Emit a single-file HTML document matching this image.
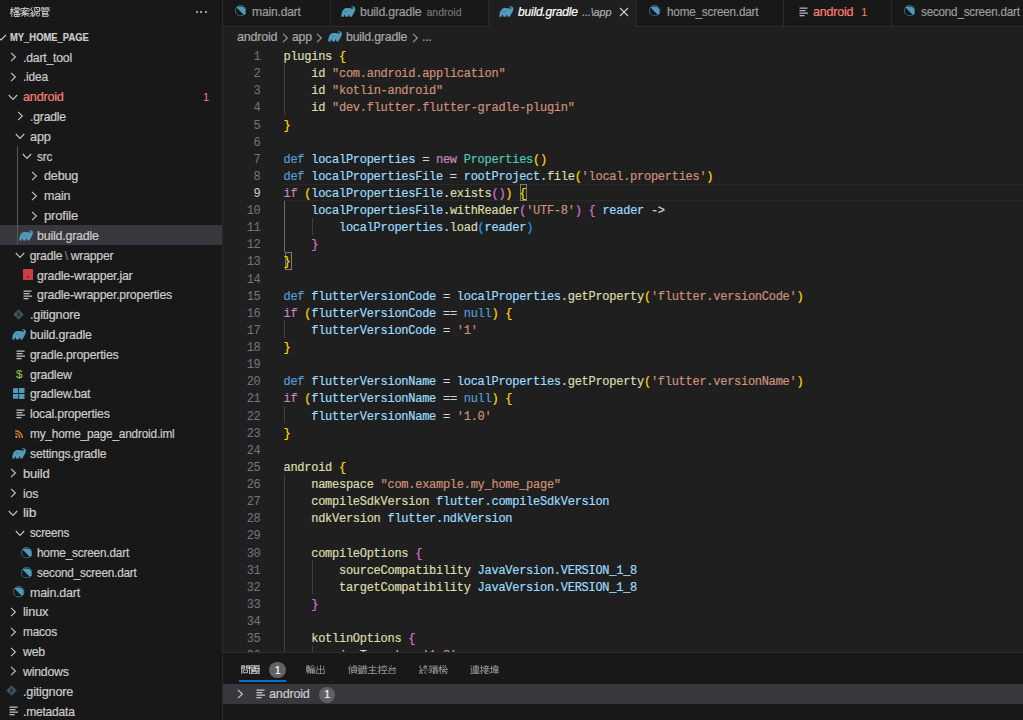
<!DOCTYPE html><html><head><meta charset="utf-8"><style>
html,body{margin:0;padding:0;background:#1f1f1f;}
#root{position:relative;width:1023px;height:720px;overflow:hidden;background:#1f1f1f;font-family:'Liberation Sans', sans-serif;}
#root div{font-family:'Liberation Sans', sans-serif;-webkit-text-stroke:0.2px currentColor;}
.code div{font-family:'Liberation Mono', monospace !important;}
</style></head><body><div id="root">
<div style="position:absolute;left:0;top:0;width:222px;height:720px;background:#181818"></div>
<div style="position:absolute;left:222px;top:0;width:1px;height:720px;background:#2b2b2b"></div>
<svg style="position:absolute;left:10px;top:6.8px;opacity:1.0" width="40.40" height="9.80" viewBox="0 0 41.224 10"><g fill="none" stroke="#cccccc" stroke-width="0.95" stroke-linecap="square"><path transform="translate(0.000,0)" d="M0.3,2.8 H3.5 M1.9,0.3 V9.8 M1.9,3.2 L0.3,7 M2,3.5 L3.5,5.5 M5.3,0.3 L5.6,1.2 M7,0.2 V1.2 M8.8,0.3 L8.5,1.2 M4.5,2.8 V1.8 H9.8 V2.8 M6,3.3 H8.5 V4.6 H6 Z M5,5.5 H9.3 V9.7 H5 Z M5,7.6 H9.3 M7.15,5.5 V9.7"/><path transform="translate(10.306,0)" d="M5,0.2 V1 M0.8,2.5 V1.5 H9.2 V2.5 M0.5,4 H9.5 M4,2.5 L2.5,6 L8,6.5 M7,3 L2,6.8 M0.5,7 H9.5 M5,5.5 V9.9 M5,7 L1,9.5 M5,7 L9,9.5"/><path transform="translate(20.612,0)" d="M2,0.3 L0.5,3 L3,4.2 L0.5,6.6 L4,6 M2.2,6.3 V9.8 M1,8 L0.5,9.5 M3.3,8 L3.8,9.5 M4.5,4 V0.5 H9.5 V4 Z M6,1.5 L8,3 M5,6 L4.5,8.5 M6.2,6 L7,9.3 L9,9 M7,5 L7.5,6.5 M9,6 L9.7,8"/><path transform="translate(30.918,0)" d="M2,0.2 L0.5,2 M1.5,1 H4.5 M3,1.2 L3.8,2.5 M6.5,0.2 L5,2 M6,1 H9.5 M7.5,1.2 L8.2,2.5 M0.8,3.8 V3 H9.2 V3.8 M2.5,4.5 V9.8 M2.5,4.5 H7.5 V6.5 H2.5 M2.5,7.5 H8 V9.5 H2.5"/></g></svg>
<div style="position:absolute;left:195.5px;top:10.8px;width:2px;height:2px;border-radius:1px;background:#c8c8c8"></div>
<div style="position:absolute;left:200px;top:10.8px;width:2px;height:2px;border-radius:1px;background:#c8c8c8"></div>
<div style="position:absolute;left:204.5px;top:10.8px;width:2px;height:2px;border-radius:1px;background:#c8c8c8"></div>
<svg style="position:absolute;left:0;top:34px" width="7" height="7" viewBox="0 0 7 7"><path d="M-4,1 L1,6 L6,1" fill="none" stroke="#cccccc" stroke-width="1.1"/></svg>
<div style="position:absolute;left:10.00px;top:30.50px;font-size:10.8px;line-height:12.8px;color:#cccccc;white-space:pre;font-weight:bold;transform:scaleX(0.872);transform-origin:0 0">MY_HOME_PAGE</div>
<svg style="position:absolute;left:9.5px;top:52.010000000000005px" width="7" height="10" viewBox="0 0 7 10"><path d="M1,0.8 L5.4,5 L1,9.2" fill="none" stroke="#c5c5c5" stroke-width="1.1"/></svg>
<div style="position:absolute;left:22.50px;top:50.50px;font-size:12.2px;line-height:14.2px;color:#cccccc;white-space:pre;letter-spacing:-0.2px;transform:scaleX(1.0027);transform-origin:0 0;">.dart_tool</div>
<svg style="position:absolute;left:9.5px;top:71.83px" width="7" height="10" viewBox="0 0 7 10"><path d="M1,0.8 L5.4,5 L1,9.2" fill="none" stroke="#c5c5c5" stroke-width="1.1"/></svg>
<div style="position:absolute;left:22.50px;top:70.32px;font-size:12.2px;line-height:14.2px;color:#cccccc;white-space:pre;letter-spacing:-0.2px;transform:scaleX(0.9782);transform-origin:0 0;">.idea</div>
<svg style="position:absolute;left:7.6px;top:93.65px" width="10" height="7" viewBox="0 0 10 7"><path d="M0.8,1 L5,5.4 L9.2,1" fill="none" stroke="#c5c5c5" stroke-width="1.1"/></svg>
<div style="position:absolute;left:22.50px;top:90.14px;font-size:12.2px;line-height:14.2px;color:#f88070;white-space:pre;letter-spacing:-0.2px;transform:scaleX(1.0357);transform-origin:0 0;">android</div>
<div style="position:absolute;left:203.00px;top:90.74px;font-size:11px;line-height:13px;color:#f88070;white-space:pre;-webkit-text-stroke:0;">1</div>
<svg style="position:absolute;left:16.7px;top:111.47px" width="7" height="10" viewBox="0 0 7 10"><path d="M1,0.8 L5.4,5 L1,9.2" fill="none" stroke="#c5c5c5" stroke-width="1.1"/></svg>
<div style="position:absolute;left:29.70px;top:109.96px;font-size:12.2px;line-height:14.2px;color:#cccccc;white-space:pre;letter-spacing:-0.2px;transform:scaleX(1.0027);transform-origin:0 0;">.gradle</div>
<svg style="position:absolute;left:14.799999999999999px;top:133.29px" width="10" height="7" viewBox="0 0 10 7"><path d="M0.8,1 L5,5.4 L9.2,1" fill="none" stroke="#c5c5c5" stroke-width="1.1"/></svg>
<div style="position:absolute;left:29.70px;top:129.78px;font-size:12.2px;line-height:14.2px;color:#cccccc;white-space:pre;letter-spacing:-0.2px;transform:scaleX(1.0478);transform-origin:0 0;">app</div>
<svg style="position:absolute;left:22.0px;top:153.10999999999999px" width="10" height="7" viewBox="0 0 10 7"><path d="M0.8,1 L5,5.4 L9.2,1" fill="none" stroke="#c5c5c5" stroke-width="1.1"/></svg>
<div style="position:absolute;left:36.90px;top:149.60px;font-size:12.2px;line-height:14.2px;color:#cccccc;white-space:pre;letter-spacing:-0.2px;transform:scaleX(0.9641);transform-origin:0 0;">src</div>
<svg style="position:absolute;left:31.1px;top:170.93px" width="7" height="10" viewBox="0 0 7 10"><path d="M1,0.8 L5.4,5 L1,9.2" fill="none" stroke="#c5c5c5" stroke-width="1.1"/></svg>
<div style="position:absolute;left:44.10px;top:169.42px;font-size:12.2px;line-height:14.2px;color:#cccccc;white-space:pre;letter-spacing:-0.2px;transform:scaleX(1.0357);transform-origin:0 0;">debug</div>
<svg style="position:absolute;left:31.1px;top:190.75px" width="7" height="10" viewBox="0 0 7 10"><path d="M1,0.8 L5.4,5 L1,9.2" fill="none" stroke="#c5c5c5" stroke-width="1.1"/></svg>
<div style="position:absolute;left:44.10px;top:189.24px;font-size:12.2px;line-height:14.2px;color:#cccccc;white-space:pre;letter-spacing:-0.2px;transform:scaleX(1.0256);transform-origin:0 0;">main</div>
<svg style="position:absolute;left:31.1px;top:210.57px" width="7" height="10" viewBox="0 0 7 10"><path d="M1,0.8 L5.4,5 L1,9.2" fill="none" stroke="#c5c5c5" stroke-width="1.1"/></svg>
<div style="position:absolute;left:44.10px;top:209.06px;font-size:12.2px;line-height:14.2px;color:#cccccc;white-space:pre;letter-spacing:-0.2px;transform:scaleX(1.0714);transform-origin:0 0;">profile</div>
<div style="position:absolute;left:0;top:225.48px;width:222px;height:19.82px;background:#37373d"></div>
<svg style="position:absolute;left:18.7px;top:229.98999999999998px" width="14.25" height="10.924999999999999" viewBox="0 0 15 11.5"><path d="M0.3,11 C0.3,8.5 0.8,5 2.9,3.2 C4,2.3 5,2 6,2 L9.6,2.3 C10.5,2.5 11.5,2.9 12.3,2.6 C12.9,2.2 12.8,1.6 12.2,1.4 L10.8,1.5 L10.8,0.3 C12.5,-0.1 14.4,0.5 14.6,2.6 C14.8,4.6 13.2,7 12.2,8.6 L10.9,11 L8.9,11 L8.05,8.5 L7.2,11 L4.5,11 L3.6,8.5 L2.7,11 Z" fill="#519aba"/><path d="M3.6,5.2 C4.6,6 5.6,5.8 6.4,4.9" fill="none" stroke="#1f1f1f" stroke-width="0.6" opacity="0.45"/></svg>
<div style="position:absolute;left:36.90px;top:228.88px;font-size:12.2px;line-height:14.2px;color:#cccccc;white-space:pre;letter-spacing:-0.2px;transform:scaleX(1.0185);transform-origin:0 0;">build.gradle</div>
<svg style="position:absolute;left:14.799999999999999px;top:252.20999999999998px" width="10" height="7" viewBox="0 0 10 7"><path d="M0.8,1 L5,5.4 L9.2,1" fill="none" stroke="#c5c5c5" stroke-width="1.1"/></svg>
<div style="position:absolute;left:29.70px;top:248.70px;font-size:12.2px;line-height:14.2px;color:#cccccc;white-space:pre;letter-spacing:-0.2px;">gradle</div>
<div style="position:absolute;left:64.70px;top:248.70px;font-size:12.2px;line-height:14.2px;color:#7a7a7a;white-space:pre;letter-spacing:-0.2px;">\</div>
<div style="position:absolute;left:70.70px;top:248.70px;font-size:12.2px;line-height:14.2px;color:#cccccc;white-space:pre;letter-spacing:-0.2px;">wrapper</div>
<svg style="position:absolute;left:22.9px;top:269.43px" width="10" height="11" viewBox="0 0 10 11"><rect x="0" y="0" width="10" height="11" fill="#cc3e44"/><rect x="4" y="7" width="2" height="1.5" fill="#6b1d20"/></svg>
<div style="position:absolute;left:36.90px;top:268.52px;font-size:12.2px;line-height:14.2px;color:#cccccc;white-space:pre;letter-spacing:-0.2px;transform:scaleX(1.0094);transform-origin:0 0;">gradle-wrapper.jar</div>
<svg style="position:absolute;left:23.299999999999997px;top:290.25px" width="10" height="10" viewBox="0 0 10 10"><g fill="#bbbbbb"><rect x="0.5" y="0.5" width="8" height="1.3"/><rect x="0.5" y="3" width="6" height="1.3"/><rect x="0.5" y="5.5" width="8.5" height="1.3"/><rect x="0.5" y="8" width="5" height="1.3"/></g></svg>
<div style="position:absolute;left:36.90px;top:288.34px;font-size:12.2px;line-height:14.2px;color:#cccccc;white-space:pre;letter-spacing:-0.2px;transform:scaleX(1.0082);transform-origin:0 0;">gradle-wrapper.properties</div>
<svg style="position:absolute;left:13.099999999999998px;top:308.87000000000006px" width="11" height="11" viewBox="0 0 11 11"><path d="M5.5,0.2 L10.8,5.5 L5.5,10.8 L0.2,5.5 Z" fill="#41535b"/><path d="M5,2.8 V8.2" stroke="#181818" stroke-width="0.9"/><path d="M6,4.6 L7,5.4 L6,6.2" fill="none" stroke="#181818" stroke-width="0.8"/></svg>
<div style="position:absolute;left:29.70px;top:308.16px;font-size:12.2px;line-height:14.2px;color:#cccccc;white-space:pre;letter-spacing:-0.2px;transform:scaleX(1.0418);transform-origin:0 0;">.gitignore</div>
<svg style="position:absolute;left:11.5px;top:329.0900000000001px" width="14.25" height="10.924999999999999" viewBox="0 0 15 11.5"><path d="M0.3,11 C0.3,8.5 0.8,5 2.9,3.2 C4,2.3 5,2 6,2 L9.6,2.3 C10.5,2.5 11.5,2.9 12.3,2.6 C12.9,2.2 12.8,1.6 12.2,1.4 L10.8,1.5 L10.8,0.3 C12.5,-0.1 14.4,0.5 14.6,2.6 C14.8,4.6 13.2,7 12.2,8.6 L10.9,11 L8.9,11 L8.05,8.5 L7.2,11 L4.5,11 L3.6,8.5 L2.7,11 Z" fill="#519aba"/><path d="M3.6,5.2 C4.6,6 5.6,5.8 6.4,4.9" fill="none" stroke="#1f1f1f" stroke-width="0.6" opacity="0.45"/></svg>
<div style="position:absolute;left:29.70px;top:327.98px;font-size:12.2px;line-height:14.2px;color:#cccccc;white-space:pre;letter-spacing:-0.2px;transform:scaleX(1.0185);transform-origin:0 0;">build.gradle</div>
<svg style="position:absolute;left:16.1px;top:349.71000000000004px" width="10" height="10" viewBox="0 0 10 10"><g fill="#bbbbbb"><rect x="0.5" y="0.5" width="8" height="1.3"/><rect x="0.5" y="3" width="6" height="1.3"/><rect x="0.5" y="5.5" width="8.5" height="1.3"/><rect x="0.5" y="8" width="5" height="1.3"/></g></svg>
<div style="position:absolute;left:29.70px;top:347.80px;font-size:12.2px;line-height:14.2px;color:#cccccc;white-space:pre;letter-spacing:-0.2px;transform:scaleX(1.0039);transform-origin:0 0;">gradle.properties</div>
<div style="position:absolute;left:15.899999999999999px;top:367.13000000000005px;font-size:11.8px;line-height:14px;color:#8dc149;-webkit-text-stroke:0.15px #8dc149">$</div>
<div style="position:absolute;left:29.70px;top:367.62px;font-size:12.2px;line-height:14.2px;color:#cccccc;white-space:pre;letter-spacing:-0.2px;transform:scaleX(1.0115);transform-origin:0 0;">gradlew</div>
<svg style="position:absolute;left:13.0px;top:388.35px" width="11.5" height="11" viewBox="0 0 11.5 11"><path d="M0,0.3 H5.3 V5.1 H0 Z M6.1,0 H11.5 V5.1 H6.1 Z M0,5.9 H5.3 V10.7 H0 Z M6.1,5.9 H11.5 V11 H6.1 Z" fill="#519aba"/></svg>
<div style="position:absolute;left:29.70px;top:387.44px;font-size:12.2px;line-height:14.2px;color:#cccccc;white-space:pre;letter-spacing:-0.2px;transform:scaleX(1.0021);transform-origin:0 0;">gradlew.bat</div>
<svg style="position:absolute;left:16.1px;top:409.17px" width="10" height="10" viewBox="0 0 10 10"><g fill="#bbbbbb"><rect x="0.5" y="0.5" width="8" height="1.3"/><rect x="0.5" y="3" width="6" height="1.3"/><rect x="0.5" y="5.5" width="8.5" height="1.3"/><rect x="0.5" y="8" width="5" height="1.3"/></g></svg>
<div style="position:absolute;left:29.70px;top:407.26px;font-size:12.2px;line-height:14.2px;color:#cccccc;white-space:pre;letter-spacing:-0.2px;transform:scaleX(1.0021);transform-origin:0 0;">local.properties</div>
<svg style="position:absolute;left:14.899999999999999px;top:429.99px" width="8.4" height="8" viewBox="0 0 9 9"><circle cx="1.4" cy="7.6" r="1.4" fill="#e37933"/><path d="M0,3.8 A5.2,5.2 0 0 1 5.2,9" fill="none" stroke="#e37933" stroke-width="1.6"/><path d="M0,0.9 A8.1,8.1 0 0 1 8.1,9" fill="none" stroke="#e37933" stroke-width="1.6"/></svg>
<div style="position:absolute;left:29.70px;top:427.08px;font-size:12.2px;line-height:14.2px;color:#cccccc;white-space:pre;letter-spacing:-0.2px;transform:scaleX(0.9702);transform-origin:0 0;">my_home_page_android.iml</div>
<svg style="position:absolute;left:11.5px;top:448.01000000000005px" width="14.25" height="10.924999999999999" viewBox="0 0 15 11.5"><path d="M0.3,11 C0.3,8.5 0.8,5 2.9,3.2 C4,2.3 5,2 6,2 L9.6,2.3 C10.5,2.5 11.5,2.9 12.3,2.6 C12.9,2.2 12.8,1.6 12.2,1.4 L10.8,1.5 L10.8,0.3 C12.5,-0.1 14.4,0.5 14.6,2.6 C14.8,4.6 13.2,7 12.2,8.6 L10.9,11 L8.9,11 L8.05,8.5 L7.2,11 L4.5,11 L3.6,8.5 L2.7,11 Z" fill="#519aba"/><path d="M3.6,5.2 C4.6,6 5.6,5.8 6.4,4.9" fill="none" stroke="#1f1f1f" stroke-width="0.6" opacity="0.45"/></svg>
<div style="position:absolute;left:29.70px;top:446.90px;font-size:12.2px;line-height:14.2px;color:#cccccc;white-space:pre;letter-spacing:-0.2px;transform:scaleX(0.9994);transform-origin:0 0;">settings.gradle</div>
<svg style="position:absolute;left:9.5px;top:468.2300000000001px" width="7" height="10" viewBox="0 0 7 10"><path d="M1,0.8 L5.4,5 L1,9.2" fill="none" stroke="#c5c5c5" stroke-width="1.1"/></svg>
<div style="position:absolute;left:22.50px;top:466.72px;font-size:12.2px;line-height:14.2px;color:#cccccc;white-space:pre;letter-spacing:-0.2px;transform:scaleX(1.0696);transform-origin:0 0;">build</div>
<svg style="position:absolute;left:9.5px;top:488.05000000000007px" width="7" height="10" viewBox="0 0 7 10"><path d="M1,0.8 L5.4,5 L1,9.2" fill="none" stroke="#c5c5c5" stroke-width="1.1"/></svg>
<div style="position:absolute;left:22.50px;top:486.54px;font-size:12.2px;line-height:14.2px;color:#cccccc;white-space:pre;letter-spacing:-0.2px;transform:scaleX(1.0136);transform-origin:0 0;">ios</div>
<svg style="position:absolute;left:7.6px;top:509.87px" width="10" height="7" viewBox="0 0 10 7"><path d="M0.8,1 L5,5.4 L9.2,1" fill="none" stroke="#c5c5c5" stroke-width="1.1"/></svg>
<div style="position:absolute;left:22.50px;top:506.36px;font-size:12.2px;line-height:14.2px;color:#cccccc;white-space:pre;letter-spacing:-0.2px;transform:scaleX(1.1373);transform-origin:0 0;">lib</div>
<svg style="position:absolute;left:14.799999999999999px;top:529.6899999999999px" width="10" height="7" viewBox="0 0 10 7"><path d="M0.8,1 L5,5.4 L9.2,1" fill="none" stroke="#c5c5c5" stroke-width="1.1"/></svg>
<div style="position:absolute;left:29.70px;top:526.18px;font-size:12.2px;line-height:14.2px;color:#cccccc;white-space:pre;letter-spacing:-0.2px;transform:scaleX(0.9487);transform-origin:0 0;">screens</div>
<svg style="position:absolute;left:20.5px;top:546.71px" width="11.399999999999999" height="11.399999999999999" viewBox="0 0 12 12"><path d="M3.6,0.7 L8.4,0.7 L11.3,3.6 L11.3,8.5 L8.5,11.3 L3.6,11.3 L0.7,8.4 L0.7,3.6 Z" fill="none" stroke="#3a7899" stroke-width="0.85"/><path d="M1.6,2.6 L3.4,1.6 L8.4,1.9 L10.9,4.1 L10.9,8.6 L9.4,10.6 Z" fill="#519aba"/></svg>
<div style="position:absolute;left:36.90px;top:546.00px;font-size:12.2px;line-height:14.2px;color:#cccccc;white-space:pre;letter-spacing:-0.2px;transform:scaleX(0.9681);transform-origin:0 0;">home_screen.dart</div>
<svg style="position:absolute;left:20.5px;top:566.5300000000001px" width="11.399999999999999" height="11.399999999999999" viewBox="0 0 12 12"><path d="M3.6,0.7 L8.4,0.7 L11.3,3.6 L11.3,8.5 L8.5,11.3 L3.6,11.3 L0.7,8.4 L0.7,3.6 Z" fill="none" stroke="#3a7899" stroke-width="0.85"/><path d="M1.6,2.6 L3.4,1.6 L8.4,1.9 L10.9,4.1 L10.9,8.6 L9.4,10.6 Z" fill="#519aba"/></svg>
<div style="position:absolute;left:36.90px;top:565.82px;font-size:12.2px;line-height:14.2px;color:#cccccc;white-space:pre;letter-spacing:-0.2px;transform:scaleX(0.9628);transform-origin:0 0;">second_screen.dart</div>
<svg style="position:absolute;left:13.3px;top:586.35px" width="11.399999999999999" height="11.399999999999999" viewBox="0 0 12 12"><path d="M3.6,0.7 L8.4,0.7 L11.3,3.6 L11.3,8.5 L8.5,11.3 L3.6,11.3 L0.7,8.4 L0.7,3.6 Z" fill="none" stroke="#3a7899" stroke-width="0.85"/><path d="M1.6,2.6 L3.4,1.6 L8.4,1.9 L10.9,4.1 L10.9,8.6 L9.4,10.6 Z" fill="#519aba"/></svg>
<div style="position:absolute;left:29.70px;top:585.64px;font-size:12.2px;line-height:14.2px;color:#cccccc;white-space:pre;letter-spacing:-0.2px;transform:scaleX(1.0193);transform-origin:0 0;">main.dart</div>
<svg style="position:absolute;left:9.5px;top:606.97px" width="7" height="10" viewBox="0 0 7 10"><path d="M1,0.8 L5.4,5 L1,9.2" fill="none" stroke="#c5c5c5" stroke-width="1.1"/></svg>
<div style="position:absolute;left:22.50px;top:605.46px;font-size:12.2px;line-height:14.2px;color:#cccccc;white-space:pre;letter-spacing:-0.2px;transform:scaleX(1.0460);transform-origin:0 0;">linux</div>
<svg style="position:absolute;left:9.5px;top:626.79px" width="7" height="10" viewBox="0 0 7 10"><path d="M1,0.8 L5.4,5 L1,9.2" fill="none" stroke="#c5c5c5" stroke-width="1.1"/></svg>
<div style="position:absolute;left:22.50px;top:625.28px;font-size:12.2px;line-height:14.2px;color:#cccccc;white-space:pre;letter-spacing:-0.2px;transform:scaleX(0.9704);transform-origin:0 0;">macos</div>
<svg style="position:absolute;left:9.5px;top:646.61px" width="7" height="10" viewBox="0 0 7 10"><path d="M1,0.8 L5.4,5 L1,9.2" fill="none" stroke="#c5c5c5" stroke-width="1.1"/></svg>
<div style="position:absolute;left:22.50px;top:645.10px;font-size:12.2px;line-height:14.2px;color:#cccccc;white-space:pre;letter-spacing:-0.2px;transform:scaleX(1.0101);transform-origin:0 0;">web</div>
<svg style="position:absolute;left:9.5px;top:666.43px" width="7" height="10" viewBox="0 0 7 10"><path d="M1,0.8 L5.4,5 L1,9.2" fill="none" stroke="#c5c5c5" stroke-width="1.1"/></svg>
<div style="position:absolute;left:22.50px;top:664.92px;font-size:12.2px;line-height:14.2px;color:#cccccc;white-space:pre;letter-spacing:-0.2px;transform:scaleX(1.0091);transform-origin:0 0;">windows</div>
<svg style="position:absolute;left:5.899999999999999px;top:685.45px" width="11" height="11" viewBox="0 0 11 11"><path d="M5.5,0.2 L10.8,5.5 L5.5,10.8 L0.2,5.5 Z" fill="#41535b"/><path d="M5,2.8 V8.2" stroke="#181818" stroke-width="0.9"/><path d="M6,4.6 L7,5.4 L6,6.2" fill="none" stroke="#181818" stroke-width="0.8"/></svg>
<div style="position:absolute;left:22.50px;top:684.74px;font-size:12.2px;line-height:14.2px;color:#cccccc;white-space:pre;letter-spacing:-0.2px;transform:scaleX(1.0418);transform-origin:0 0;">.gitignore</div>
<svg style="position:absolute;left:8.9px;top:706.47px" width="10" height="10" viewBox="0 0 10 10"><g fill="#bbbbbb"><rect x="0.5" y="0.5" width="8" height="1.3"/><rect x="0.5" y="3" width="6" height="1.3"/><rect x="0.5" y="5.5" width="8.5" height="1.3"/><rect x="0.5" y="8" width="5" height="1.3"/></g></svg>
<div style="position:absolute;left:22.50px;top:704.56px;font-size:12.2px;line-height:14.2px;color:#cccccc;white-space:pre;letter-spacing:-0.2px;transform:scaleX(0.9875);transform-origin:0 0;">.metadata</div>
<div style="position:absolute;left:17px;top:146.20px;width:1px;height:99.10px;background:#585858"></div>
<div style="position:absolute;left:223px;top:0;width:800px;height:26px;background:#181818"></div>
<div style="position:absolute;left:223px;top:26px;width:800px;height:1px;background:#2b2b2b"></div>
<div style="position:absolute;left:489px;top:0;width:147px;height:27px;background:#1f1f1f"></div>
<div style="position:absolute;left:330px;top:0;width:1px;height:26px;background:#2b2b2b"></div>
<div style="position:absolute;left:488px;top:0;width:1px;height:26px;background:#2b2b2b"></div>
<div style="position:absolute;left:636px;top:0;width:1px;height:26px;background:#2b2b2b"></div>
<div style="position:absolute;left:783px;top:0;width:1px;height:26px;background:#2b2b2b"></div>
<div style="position:absolute;left:891px;top:0;width:1px;height:26px;background:#2b2b2b"></div>
<svg style="position:absolute;left:234.6px;top:4.8px" width="11.399999999999999" height="11.399999999999999" viewBox="0 0 12 12"><path d="M3.6,0.7 L8.4,0.7 L11.3,3.6 L11.3,8.5 L8.5,11.3 L3.6,11.3 L0.7,8.4 L0.7,3.6 Z" fill="none" stroke="#3a7899" stroke-width="0.85"/><path d="M1.6,2.6 L3.4,1.6 L8.4,1.9 L10.9,4.1 L10.9,8.6 L9.4,10.6 Z" fill="#519aba"/></svg>
<div style="position:absolute;left:251.70px;top:5.00px;font-size:12.2px;line-height:14.2px;color:#9d9d9d;white-space:pre;letter-spacing:-0.2px;transform:scaleX(0.9948);transform-origin:0 0;">main.dart</div>
<svg style="position:absolute;left:341px;top:5.5px" width="14.7" height="11.27" viewBox="0 0 15 11.5"><path d="M0.3,11 C0.3,8.5 0.8,5 2.9,3.2 C4,2.3 5,2 6,2 L9.6,2.3 C10.5,2.5 11.5,2.9 12.3,2.6 C12.9,2.2 12.8,1.6 12.2,1.4 L10.8,1.5 L10.8,0.3 C12.5,-0.1 14.4,0.5 14.6,2.6 C14.8,4.6 13.2,7 12.2,8.6 L10.9,11 L8.9,11 L8.05,8.5 L7.2,11 L4.5,11 L3.6,8.5 L2.7,11 Z" fill="#519aba"/><path d="M3.6,5.2 C4.6,6 5.6,5.8 6.4,4.9" fill="none" stroke="#1f1f1f" stroke-width="0.6" opacity="0.45"/></svg>
<div style="position:absolute;left:360.00px;top:5.00px;font-size:12.2px;line-height:14.2px;color:#9d9d9d;white-space:pre;letter-spacing:-0.2px;transform:scaleX(1.0119);transform-origin:0 0;">build.gradle</div>
<div style="position:absolute;left:426.50px;top:5.85px;font-size:10.5px;line-height:12.5px;color:#7d7d7d;white-space:pre;-webkit-text-stroke:0.1px currentColor;">android</div>
<svg style="position:absolute;left:499px;top:5.5px" width="14.7" height="11.27" viewBox="0 0 15 11.5"><path d="M0.3,11 C0.3,8.5 0.8,5 2.9,3.2 C4,2.3 5,2 6,2 L9.6,2.3 C10.5,2.5 11.5,2.9 12.3,2.6 C12.9,2.2 12.8,1.6 12.2,1.4 L10.8,1.5 L10.8,0.3 C12.5,-0.1 14.4,0.5 14.6,2.6 C14.8,4.6 13.2,7 12.2,8.6 L10.9,11 L8.9,11 L8.05,8.5 L7.2,11 L4.5,11 L3.6,8.5 L2.7,11 Z" fill="#519aba"/><path d="M3.6,5.2 C4.6,6 5.6,5.8 6.4,4.9" fill="none" stroke="#1f1f1f" stroke-width="0.6" opacity="0.45"/></svg>
<div style="position:absolute;left:517.80px;top:5.00px;font-size:12.2px;line-height:14.2px;color:#ffffff;white-space:pre;letter-spacing:-0.2px;font-style:italic;transform:scaleX(0.9839);transform-origin:0 0;">build.gradle</div>
<div style="position:absolute;left:582.00px;top:5.70px;font-size:10.8px;line-height:12.8px;color:#b0b0b0;white-space:pre;font-style:italic;letter-spacing:-0.1px">...\app</div>
<svg style="position:absolute;left:619px;top:6.5px" width="10" height="10" viewBox="0 0 10 10"><path d="M1,1 L9,9 M9,1 L1,9" stroke="#cccccc" stroke-width="1.1"/></svg>
<svg style="position:absolute;left:649.4px;top:4.8px" width="11.399999999999999" height="11.399999999999999" viewBox="0 0 12 12"><path d="M3.6,0.7 L8.4,0.7 L11.3,3.6 L11.3,8.5 L8.5,11.3 L3.6,11.3 L0.7,8.4 L0.7,3.6 Z" fill="none" stroke="#3a7899" stroke-width="0.85"/><path d="M1.6,2.6 L3.4,1.6 L8.4,1.9 L10.9,4.1 L10.9,8.6 L9.4,10.6 Z" fill="#519aba"/></svg>
<div style="position:absolute;left:666.80px;top:5.00px;font-size:12.2px;line-height:14.2px;color:#9d9d9d;white-space:pre;letter-spacing:-0.2px;transform:scaleX(0.9608);transform-origin:0 0;">home_screen.dart</div>
<svg style="position:absolute;left:799px;top:7px" width="10" height="10" viewBox="0 0 10 10"><g fill="#b0b0b0"><rect x="0.5" y="0.5" width="8" height="1.3"/><rect x="0.5" y="3" width="6" height="1.3"/><rect x="0.5" y="5.5" width="8.5" height="1.3"/><rect x="0.5" y="8" width="5" height="1.3"/></g></svg>
<div style="position:absolute;left:812.80px;top:5.00px;font-size:12.2px;line-height:14.2px;color:#f88070;white-space:pre;letter-spacing:-0.2px;transform:scaleX(1.0255);transform-origin:0 0;">android</div>
<div style="position:absolute;left:861.30px;top:5.70px;font-size:10.8px;line-height:12.8px;color:#f88070;white-space:pre;-webkit-text-stroke:0;">1</div>
<svg style="position:absolute;left:904px;top:4.8px" width="11.399999999999999" height="11.399999999999999" viewBox="0 0 12 12"><path d="M3.6,0.7 L8.4,0.7 L11.3,3.6 L11.3,8.5 L8.5,11.3 L3.6,11.3 L0.7,8.4 L0.7,3.6 Z" fill="none" stroke="#3a7899" stroke-width="0.85"/><path d="M1.6,2.6 L3.4,1.6 L8.4,1.9 L10.9,4.1 L10.9,8.6 L9.4,10.6 Z" fill="#519aba"/></svg>
<div style="position:absolute;left:921.30px;top:5.00px;font-size:12.2px;line-height:14.2px;color:#9d9d9d;white-space:pre;letter-spacing:-0.2px;transform:scaleX(0.9550);transform-origin:0 0;">second_screen.dart</div>
<div style="position:absolute;left:237.20px;top:30.20px;font-size:12.2px;line-height:14.2px;color:#a9a9a9;white-space:pre;letter-spacing:-0.2px;transform:scaleX(1.0255);transform-origin:0 0;">android</div>
<svg style="position:absolute;left:282px;top:32.6px" width="7" height="10" viewBox="0 0 7 10"><path d="M1,0.8 L5.4,5 L1,9.2" fill="none" stroke="#9a9a9a" stroke-width="1.1"/></svg>
<div style="position:absolute;left:291.60px;top:30.20px;font-size:12.2px;line-height:14.2px;color:#a9a9a9;white-space:pre;letter-spacing:-0.2px;transform:scaleX(1.0023);transform-origin:0 0;">app</div>
<svg style="position:absolute;left:315.5px;top:32.6px" width="7" height="10" viewBox="0 0 7 10"><path d="M1,0.8 L5.4,5 L1,9.2" fill="none" stroke="#9a9a9a" stroke-width="1.1"/></svg>
<svg style="position:absolute;left:327.5px;top:31.0px" width="14.25" height="10.924999999999999" viewBox="0 0 15 11.5"><path d="M0.3,11 C0.3,8.5 0.8,5 2.9,3.2 C4,2.3 5,2 6,2 L9.6,2.3 C10.5,2.5 11.5,2.9 12.3,2.6 C12.9,2.2 12.8,1.6 12.2,1.4 L10.8,1.5 L10.8,0.3 C12.5,-0.1 14.4,0.5 14.6,2.6 C14.8,4.6 13.2,7 12.2,8.6 L10.9,11 L8.9,11 L8.05,8.5 L7.2,11 L4.5,11 L3.6,8.5 L2.7,11 Z" fill="#519aba"/><path d="M3.6,5.2 C4.6,6 5.6,5.8 6.4,4.9" fill="none" stroke="#1f1f1f" stroke-width="0.6" opacity="0.45"/></svg>
<div style="position:absolute;left:346.00px;top:30.20px;font-size:12.2px;line-height:14.2px;color:#a9a9a9;white-space:pre;letter-spacing:-0.2px;transform:scaleX(1.0102);transform-origin:0 0;">build.gradle</div>
<svg style="position:absolute;left:411.5px;top:32.6px" width="7" height="10" viewBox="0 0 7 10"><path d="M1,0.8 L5.4,5 L1,9.2" fill="none" stroke="#9a9a9a" stroke-width="1.1"/></svg>
<div style="position:absolute;left:422.00px;top:30.20px;font-size:12.2px;line-height:14.2px;color:#a9a9a9;white-space:pre;letter-spacing:-0.2px;">...</div>
<div style="position:absolute;left:223px;top:46px;width:800px;height:606.5px;overflow:hidden">
<div style="position:absolute;left:60.5px;top:138.16px;width:800px;height:14.42px;border-top:1px solid #282828;border-bottom:1px solid #282828"></div>
<div style="position:absolute;left:297.12px;top:137.96px;width:5.33px;height:15.12px;border:1px solid #7a7a7a;background:rgba(0,100,0,0.1)"></div>
<div style="position:absolute;left:61.50px;top:206.44px;width:5.33px;height:15.12px;border:1px solid #7a7a7a;background:rgba(0,100,0,0.1)"></div>
<div style="position:absolute;left:61.00px;top:17.62px;width:1px;height:51.36px;background:#404040"></div>
<div style="position:absolute;left:61.00px;top:154.58px;width:1px;height:51.36px;background:#707070"></div>
<div style="position:absolute;left:88.72px;top:171.70px;width:1px;height:17.12px;background:#404040"></div>
<div style="position:absolute;left:61.00px;top:274.42px;width:1px;height:17.12px;background:#404040"></div>
<div style="position:absolute;left:61.00px;top:360.02px;width:1px;height:17.12px;background:#404040"></div>
<div style="position:absolute;left:61.00px;top:428.50px;width:1px;height:205.44px;background:#404040"></div>
<div style="position:absolute;left:88.72px;top:514.10px;width:1px;height:34.24px;background:#404040"></div>
<div style="position:absolute;left:88.72px;top:599.70px;width:1px;height:34.24px;background:#404040"></div>
<div class="code" style="position:absolute;left:0px;top:3.04px;width:37.5px;text-align:right;font:12.0px/17.12px 'Liberation Mono', monospace;letter-spacing:-0.270px;color:#6e7681;-webkit-text-stroke:0.05px currentColor">1</div>
<div style="position:absolute;left:60.50px;top:3.04px;font:12.0px/17.12px 'Liberation Mono', monospace;letter-spacing:-0.270px;white-space:pre"><span style="color:#dcdcaa">plugins</span><span style="color:#d4d4d4"> </span><span style="color:#ffd700">{</span></div>
<div class="code" style="position:absolute;left:0px;top:20.16px;width:37.5px;text-align:right;font:12.0px/17.12px 'Liberation Mono', monospace;letter-spacing:-0.270px;color:#6e7681;-webkit-text-stroke:0.05px currentColor">2</div>
<div style="position:absolute;left:60.50px;top:20.16px;font:12.0px/17.12px 'Liberation Mono', monospace;letter-spacing:-0.270px;white-space:pre"><span style="color:#d4d4d4">    </span><span style="color:#dcdcaa">id</span><span style="color:#d4d4d4"> </span><span style="color:#ce9178">&quot;com.android.application&quot;</span></div>
<div class="code" style="position:absolute;left:0px;top:37.28px;width:37.5px;text-align:right;font:12.0px/17.12px 'Liberation Mono', monospace;letter-spacing:-0.270px;color:#6e7681;-webkit-text-stroke:0.05px currentColor">3</div>
<div style="position:absolute;left:60.50px;top:37.28px;font:12.0px/17.12px 'Liberation Mono', monospace;letter-spacing:-0.270px;white-space:pre"><span style="color:#d4d4d4">    </span><span style="color:#dcdcaa">id</span><span style="color:#d4d4d4"> </span><span style="color:#ce9178">&quot;kotlin-android&quot;</span></div>
<div class="code" style="position:absolute;left:0px;top:54.40px;width:37.5px;text-align:right;font:12.0px/17.12px 'Liberation Mono', monospace;letter-spacing:-0.270px;color:#6e7681;-webkit-text-stroke:0.05px currentColor">4</div>
<div style="position:absolute;left:60.50px;top:54.40px;font:12.0px/17.12px 'Liberation Mono', monospace;letter-spacing:-0.270px;white-space:pre"><span style="color:#d4d4d4">    </span><span style="color:#dcdcaa">id</span><span style="color:#d4d4d4"> </span><span style="color:#ce9178">&quot;dev.flutter.flutter-gradle-plugin&quot;</span></div>
<div class="code" style="position:absolute;left:0px;top:71.52px;width:37.5px;text-align:right;font:12.0px/17.12px 'Liberation Mono', monospace;letter-spacing:-0.270px;color:#6e7681;-webkit-text-stroke:0.05px currentColor">5</div>
<div style="position:absolute;left:60.50px;top:71.52px;font:12.0px/17.12px 'Liberation Mono', monospace;letter-spacing:-0.270px;white-space:pre"><span style="color:#ffd700">}</span></div>
<div class="code" style="position:absolute;left:0px;top:88.64px;width:37.5px;text-align:right;font:12.0px/17.12px 'Liberation Mono', monospace;letter-spacing:-0.270px;color:#6e7681;-webkit-text-stroke:0.05px currentColor">6</div>
<div class="code" style="position:absolute;left:0px;top:105.76px;width:37.5px;text-align:right;font:12.0px/17.12px 'Liberation Mono', monospace;letter-spacing:-0.270px;color:#6e7681;-webkit-text-stroke:0.05px currentColor">7</div>
<div style="position:absolute;left:60.50px;top:105.76px;font:12.0px/17.12px 'Liberation Mono', monospace;letter-spacing:-0.270px;white-space:pre"><span style="color:#569cd6">def</span><span style="color:#d4d4d4"> </span><span style="color:#9cdcfe">localProperties</span><span style="color:#d4d4d4"> = </span><span style="color:#c586c0">new</span><span style="color:#d4d4d4"> </span><span style="color:#4ec9b0">Properties</span><span style="color:#ffd700">()</span></div>
<div class="code" style="position:absolute;left:0px;top:122.88px;width:37.5px;text-align:right;font:12.0px/17.12px 'Liberation Mono', monospace;letter-spacing:-0.270px;color:#6e7681;-webkit-text-stroke:0.05px currentColor">8</div>
<div style="position:absolute;left:60.50px;top:122.88px;font:12.0px/17.12px 'Liberation Mono', monospace;letter-spacing:-0.270px;white-space:pre"><span style="color:#569cd6">def</span><span style="color:#d4d4d4"> </span><span style="color:#9cdcfe">localPropertiesFile</span><span style="color:#d4d4d4"> = </span><span style="color:#9cdcfe">rootProject</span><span style="color:#d4d4d4">.</span><span style="color:#dcdcaa">file</span><span style="color:#ffd700">(</span><span style="color:#ce9178">&#x27;local.properties&#x27;</span><span style="color:#ffd700">)</span></div>
<div class="code" style="position:absolute;left:0px;top:140.00px;width:37.5px;text-align:right;font:12.0px/17.12px 'Liberation Mono', monospace;letter-spacing:-0.270px;color:#cccccc;-webkit-text-stroke:0.05px currentColor">9</div>
<div style="position:absolute;left:60.50px;top:140.00px;font:12.0px/17.12px 'Liberation Mono', monospace;letter-spacing:-0.270px;white-space:pre"><span style="color:#c586c0">if</span><span style="color:#d4d4d4"> </span><span style="color:#ffd700">(</span><span style="color:#9cdcfe">localPropertiesFile</span><span style="color:#d4d4d4">.</span><span style="color:#dcdcaa">exists</span><span style="color:#da70d6">()</span><span style="color:#ffd700">)</span><span style="color:#d4d4d4"> </span><span style="color:#ffd700">{</span></div>
<div class="code" style="position:absolute;left:0px;top:157.12px;width:37.5px;text-align:right;font:12.0px/17.12px 'Liberation Mono', monospace;letter-spacing:-0.270px;color:#6e7681;-webkit-text-stroke:0.05px currentColor">10</div>
<div style="position:absolute;left:60.50px;top:157.12px;font:12.0px/17.12px 'Liberation Mono', monospace;letter-spacing:-0.270px;white-space:pre"><span style="color:#d4d4d4">    </span><span style="color:#9cdcfe">localPropertiesFile</span><span style="color:#d4d4d4">.</span><span style="color:#dcdcaa">withReader</span><span style="color:#da70d6">(</span><span style="color:#ce9178">&#x27;UTF-8&#x27;</span><span style="color:#da70d6">)</span><span style="color:#d4d4d4"> </span><span style="color:#da70d6">{</span><span style="color:#d4d4d4"> </span><span style="color:#9cdcfe">reader</span><span style="color:#d4d4d4"> -&gt;</span></div>
<div class="code" style="position:absolute;left:0px;top:174.24px;width:37.5px;text-align:right;font:12.0px/17.12px 'Liberation Mono', monospace;letter-spacing:-0.270px;color:#6e7681;-webkit-text-stroke:0.05px currentColor">11</div>
<div style="position:absolute;left:60.50px;top:174.24px;font:12.0px/17.12px 'Liberation Mono', monospace;letter-spacing:-0.270px;white-space:pre"><span style="color:#d4d4d4">        </span><span style="color:#9cdcfe">localProperties</span><span style="color:#d4d4d4">.</span><span style="color:#dcdcaa">load</span><span style="color:#179fff">(</span><span style="color:#9cdcfe">reader</span><span style="color:#179fff">)</span></div>
<div class="code" style="position:absolute;left:0px;top:191.36px;width:37.5px;text-align:right;font:12.0px/17.12px 'Liberation Mono', monospace;letter-spacing:-0.270px;color:#6e7681;-webkit-text-stroke:0.05px currentColor">12</div>
<div style="position:absolute;left:60.50px;top:191.36px;font:12.0px/17.12px 'Liberation Mono', monospace;letter-spacing:-0.270px;white-space:pre"><span style="color:#d4d4d4">    </span><span style="color:#da70d6">}</span></div>
<div class="code" style="position:absolute;left:0px;top:208.48px;width:37.5px;text-align:right;font:12.0px/17.12px 'Liberation Mono', monospace;letter-spacing:-0.270px;color:#6e7681;-webkit-text-stroke:0.05px currentColor">13</div>
<div style="position:absolute;left:60.50px;top:208.48px;font:12.0px/17.12px 'Liberation Mono', monospace;letter-spacing:-0.270px;white-space:pre"><span style="color:#ffd700">}</span></div>
<div class="code" style="position:absolute;left:0px;top:225.60px;width:37.5px;text-align:right;font:12.0px/17.12px 'Liberation Mono', monospace;letter-spacing:-0.270px;color:#6e7681;-webkit-text-stroke:0.05px currentColor">14</div>
<div class="code" style="position:absolute;left:0px;top:242.72px;width:37.5px;text-align:right;font:12.0px/17.12px 'Liberation Mono', monospace;letter-spacing:-0.270px;color:#6e7681;-webkit-text-stroke:0.05px currentColor">15</div>
<div style="position:absolute;left:60.50px;top:242.72px;font:12.0px/17.12px 'Liberation Mono', monospace;letter-spacing:-0.270px;white-space:pre"><span style="color:#569cd6">def</span><span style="color:#d4d4d4"> </span><span style="color:#9cdcfe">flutterVersionCode</span><span style="color:#d4d4d4"> = </span><span style="color:#9cdcfe">localProperties</span><span style="color:#d4d4d4">.</span><span style="color:#dcdcaa">getProperty</span><span style="color:#ffd700">(</span><span style="color:#ce9178">&#x27;flutter.versionCode&#x27;</span><span style="color:#ffd700">)</span></div>
<div class="code" style="position:absolute;left:0px;top:259.84px;width:37.5px;text-align:right;font:12.0px/17.12px 'Liberation Mono', monospace;letter-spacing:-0.270px;color:#6e7681;-webkit-text-stroke:0.05px currentColor">16</div>
<div style="position:absolute;left:60.50px;top:259.84px;font:12.0px/17.12px 'Liberation Mono', monospace;letter-spacing:-0.270px;white-space:pre"><span style="color:#c586c0">if</span><span style="color:#d4d4d4"> </span><span style="color:#ffd700">(</span><span style="color:#9cdcfe">flutterVersionCode</span><span style="color:#d4d4d4"> == </span><span style="color:#569cd6">null</span><span style="color:#ffd700">)</span><span style="color:#d4d4d4"> </span><span style="color:#ffd700">{</span></div>
<div class="code" style="position:absolute;left:0px;top:276.96px;width:37.5px;text-align:right;font:12.0px/17.12px 'Liberation Mono', monospace;letter-spacing:-0.270px;color:#6e7681;-webkit-text-stroke:0.05px currentColor">17</div>
<div style="position:absolute;left:60.50px;top:276.96px;font:12.0px/17.12px 'Liberation Mono', monospace;letter-spacing:-0.270px;white-space:pre"><span style="color:#d4d4d4">    </span><span style="color:#9cdcfe">flutterVersionCode</span><span style="color:#d4d4d4"> = </span><span style="color:#ce9178">&#x27;1&#x27;</span></div>
<div class="code" style="position:absolute;left:0px;top:294.08px;width:37.5px;text-align:right;font:12.0px/17.12px 'Liberation Mono', monospace;letter-spacing:-0.270px;color:#6e7681;-webkit-text-stroke:0.05px currentColor">18</div>
<div style="position:absolute;left:60.50px;top:294.08px;font:12.0px/17.12px 'Liberation Mono', monospace;letter-spacing:-0.270px;white-space:pre"><span style="color:#ffd700">}</span></div>
<div class="code" style="position:absolute;left:0px;top:311.20px;width:37.5px;text-align:right;font:12.0px/17.12px 'Liberation Mono', monospace;letter-spacing:-0.270px;color:#6e7681;-webkit-text-stroke:0.05px currentColor">19</div>
<div class="code" style="position:absolute;left:0px;top:328.32px;width:37.5px;text-align:right;font:12.0px/17.12px 'Liberation Mono', monospace;letter-spacing:-0.270px;color:#6e7681;-webkit-text-stroke:0.05px currentColor">20</div>
<div style="position:absolute;left:60.50px;top:328.32px;font:12.0px/17.12px 'Liberation Mono', monospace;letter-spacing:-0.270px;white-space:pre"><span style="color:#569cd6">def</span><span style="color:#d4d4d4"> </span><span style="color:#9cdcfe">flutterVersionName</span><span style="color:#d4d4d4"> = </span><span style="color:#9cdcfe">localProperties</span><span style="color:#d4d4d4">.</span><span style="color:#dcdcaa">getProperty</span><span style="color:#ffd700">(</span><span style="color:#ce9178">&#x27;flutter.versionName&#x27;</span><span style="color:#ffd700">)</span></div>
<div class="code" style="position:absolute;left:0px;top:345.44px;width:37.5px;text-align:right;font:12.0px/17.12px 'Liberation Mono', monospace;letter-spacing:-0.270px;color:#6e7681;-webkit-text-stroke:0.05px currentColor">21</div>
<div style="position:absolute;left:60.50px;top:345.44px;font:12.0px/17.12px 'Liberation Mono', monospace;letter-spacing:-0.270px;white-space:pre"><span style="color:#c586c0">if</span><span style="color:#d4d4d4"> </span><span style="color:#ffd700">(</span><span style="color:#9cdcfe">flutterVersionName</span><span style="color:#d4d4d4"> == </span><span style="color:#569cd6">null</span><span style="color:#ffd700">)</span><span style="color:#d4d4d4"> </span><span style="color:#ffd700">{</span></div>
<div class="code" style="position:absolute;left:0px;top:362.56px;width:37.5px;text-align:right;font:12.0px/17.12px 'Liberation Mono', monospace;letter-spacing:-0.270px;color:#6e7681;-webkit-text-stroke:0.05px currentColor">22</div>
<div style="position:absolute;left:60.50px;top:362.56px;font:12.0px/17.12px 'Liberation Mono', monospace;letter-spacing:-0.270px;white-space:pre"><span style="color:#d4d4d4">    </span><span style="color:#9cdcfe">flutterVersionName</span><span style="color:#d4d4d4"> = </span><span style="color:#ce9178">&#x27;1.0&#x27;</span></div>
<div class="code" style="position:absolute;left:0px;top:379.68px;width:37.5px;text-align:right;font:12.0px/17.12px 'Liberation Mono', monospace;letter-spacing:-0.270px;color:#6e7681;-webkit-text-stroke:0.05px currentColor">23</div>
<div style="position:absolute;left:60.50px;top:379.68px;font:12.0px/17.12px 'Liberation Mono', monospace;letter-spacing:-0.270px;white-space:pre"><span style="color:#ffd700">}</span></div>
<div class="code" style="position:absolute;left:0px;top:396.80px;width:37.5px;text-align:right;font:12.0px/17.12px 'Liberation Mono', monospace;letter-spacing:-0.270px;color:#6e7681;-webkit-text-stroke:0.05px currentColor">24</div>
<div class="code" style="position:absolute;left:0px;top:413.92px;width:37.5px;text-align:right;font:12.0px/17.12px 'Liberation Mono', monospace;letter-spacing:-0.270px;color:#6e7681;-webkit-text-stroke:0.05px currentColor">25</div>
<div style="position:absolute;left:60.50px;top:413.92px;font:12.0px/17.12px 'Liberation Mono', monospace;letter-spacing:-0.270px;white-space:pre"><span style="color:#dcdcaa">android</span><span style="color:#d4d4d4"> </span><span style="color:#ffd700">{</span></div>
<div class="code" style="position:absolute;left:0px;top:431.04px;width:37.5px;text-align:right;font:12.0px/17.12px 'Liberation Mono', monospace;letter-spacing:-0.270px;color:#6e7681;-webkit-text-stroke:0.05px currentColor">26</div>
<div style="position:absolute;left:60.50px;top:431.04px;font:12.0px/17.12px 'Liberation Mono', monospace;letter-spacing:-0.270px;white-space:pre"><span style="color:#d4d4d4">    </span><span style="color:#dcdcaa">namespace</span><span style="color:#d4d4d4"> </span><span style="color:#ce9178">&quot;com.example.my_home_page&quot;</span></div>
<div class="code" style="position:absolute;left:0px;top:448.16px;width:37.5px;text-align:right;font:12.0px/17.12px 'Liberation Mono', monospace;letter-spacing:-0.270px;color:#6e7681;-webkit-text-stroke:0.05px currentColor">27</div>
<div style="position:absolute;left:60.50px;top:448.16px;font:12.0px/17.12px 'Liberation Mono', monospace;letter-spacing:-0.270px;white-space:pre"><span style="color:#d4d4d4">    </span><span style="color:#dcdcaa">compileSdkVersion</span><span style="color:#d4d4d4"> </span><span style="color:#9cdcfe">flutter.compileSdkVersion</span></div>
<div class="code" style="position:absolute;left:0px;top:465.28px;width:37.5px;text-align:right;font:12.0px/17.12px 'Liberation Mono', monospace;letter-spacing:-0.270px;color:#6e7681;-webkit-text-stroke:0.05px currentColor">28</div>
<div style="position:absolute;left:60.50px;top:465.28px;font:12.0px/17.12px 'Liberation Mono', monospace;letter-spacing:-0.270px;white-space:pre"><span style="color:#d4d4d4">    </span><span style="color:#dcdcaa">ndkVersion</span><span style="color:#d4d4d4"> </span><span style="color:#9cdcfe">flutter.ndkVersion</span></div>
<div class="code" style="position:absolute;left:0px;top:482.40px;width:37.5px;text-align:right;font:12.0px/17.12px 'Liberation Mono', monospace;letter-spacing:-0.270px;color:#6e7681;-webkit-text-stroke:0.05px currentColor">29</div>
<div class="code" style="position:absolute;left:0px;top:499.52px;width:37.5px;text-align:right;font:12.0px/17.12px 'Liberation Mono', monospace;letter-spacing:-0.270px;color:#6e7681;-webkit-text-stroke:0.05px currentColor">30</div>
<div style="position:absolute;left:60.50px;top:499.52px;font:12.0px/17.12px 'Liberation Mono', monospace;letter-spacing:-0.270px;white-space:pre"><span style="color:#d4d4d4">    </span><span style="color:#dcdcaa">compileOptions</span><span style="color:#d4d4d4"> </span><span style="color:#da70d6">{</span></div>
<div class="code" style="position:absolute;left:0px;top:516.64px;width:37.5px;text-align:right;font:12.0px/17.12px 'Liberation Mono', monospace;letter-spacing:-0.270px;color:#6e7681;-webkit-text-stroke:0.05px currentColor">31</div>
<div style="position:absolute;left:60.50px;top:516.64px;font:12.0px/17.12px 'Liberation Mono', monospace;letter-spacing:-0.270px;white-space:pre"><span style="color:#d4d4d4">        </span><span style="color:#dcdcaa">sourceCompatibility</span><span style="color:#d4d4d4"> </span><span style="color:#9cdcfe">JavaVersion.VERSION_1_8</span></div>
<div class="code" style="position:absolute;left:0px;top:533.76px;width:37.5px;text-align:right;font:12.0px/17.12px 'Liberation Mono', monospace;letter-spacing:-0.270px;color:#6e7681;-webkit-text-stroke:0.05px currentColor">32</div>
<div style="position:absolute;left:60.50px;top:533.76px;font:12.0px/17.12px 'Liberation Mono', monospace;letter-spacing:-0.270px;white-space:pre"><span style="color:#d4d4d4">        </span><span style="color:#dcdcaa">targetCompatibility</span><span style="color:#d4d4d4"> </span><span style="color:#9cdcfe">JavaVersion.VERSION_1_8</span></div>
<div class="code" style="position:absolute;left:0px;top:550.88px;width:37.5px;text-align:right;font:12.0px/17.12px 'Liberation Mono', monospace;letter-spacing:-0.270px;color:#6e7681;-webkit-text-stroke:0.05px currentColor">33</div>
<div style="position:absolute;left:60.50px;top:550.88px;font:12.0px/17.12px 'Liberation Mono', monospace;letter-spacing:-0.270px;white-space:pre"><span style="color:#d4d4d4">    </span><span style="color:#da70d6">}</span></div>
<div class="code" style="position:absolute;left:0px;top:568.00px;width:37.5px;text-align:right;font:12.0px/17.12px 'Liberation Mono', monospace;letter-spacing:-0.270px;color:#6e7681;-webkit-text-stroke:0.05px currentColor">34</div>
<div class="code" style="position:absolute;left:0px;top:585.12px;width:37.5px;text-align:right;font:12.0px/17.12px 'Liberation Mono', monospace;letter-spacing:-0.270px;color:#6e7681;-webkit-text-stroke:0.05px currentColor">35</div>
<div style="position:absolute;left:60.50px;top:585.12px;font:12.0px/17.12px 'Liberation Mono', monospace;letter-spacing:-0.270px;white-space:pre"><span style="color:#d4d4d4">    </span><span style="color:#dcdcaa">kotlinOptions</span><span style="color:#d4d4d4"> </span><span style="color:#da70d6">{</span></div>
<div class="code" style="position:absolute;left:0px;top:602.24px;width:37.5px;text-align:right;font:12.0px/17.12px 'Liberation Mono', monospace;letter-spacing:-0.270px;color:#6e7681;-webkit-text-stroke:0.05px currentColor">36</div>
<div style="position:absolute;left:60.50px;top:602.24px;font:12.0px/17.12px 'Liberation Mono', monospace;letter-spacing:-0.270px;white-space:pre"><span style="color:#d4d4d4">        </span><span style="color:#dcdcaa">jvmTarget</span><span style="color:#d4d4d4"> = </span><span style="color:#ce9178">&#x27;1.8&#x27;</span></div>
<div class="code" style="position:absolute;left:0px;top:619.36px;width:37.5px;text-align:right;font:12.0px/17.12px 'Liberation Mono', monospace;letter-spacing:-0.270px;color:#6e7681;-webkit-text-stroke:0.05px currentColor">37</div>
</div>
<div style="position:absolute;left:223px;top:652.5px;width:800px;height:68px;background:#181818"></div>
<div style="position:absolute;left:223px;top:652px;width:800px;height:1px;background:#2b2b2b"></div>
<svg style="position:absolute;left:240.8px;top:664.6px;opacity:1.0" width="19.60" height="9.20" viewBox="0 0 21.304 10"><g fill="none" stroke="#e7e7e7" stroke-width="0.85" stroke-linecap="square"><path transform="translate(0.000,0)" d="M0.8,9.6 V0.8 H4 V3.6 H0.8 M0.8,2.2 H4 M9.2,9.6 V0.8 H6 V3.6 H9.2 M6,2.2 H9.2 M3,5.3 H7 V8.4 H3 Z"/><path transform="translate(10.652,0)" d="M0.6,0.6 H4 V4.4 H0.6 Z M0.6,2.5 H4 M0.5,5.9 H4 M2.3,4.4 V8 M2.3,7 H4 M1.2,6.5 L0.4,9 M0.4,9.5 H9.6 M5,0.8 H9.6 M5.5,2 H9 V7.4 H5.5 Z M5.5,3.8 H9 M5.5,5.6 H9 M6.5,7.5 L5.5,9 M8,7.5 L9.5,9"/></g></svg>
<div style="position:absolute;left:269.3px;top:662.3px;width:16.5px;height:16px;border-radius:8px;background:#616161"></div>
<div style="position:absolute;left:274.80px;top:664.00px;font-size:10.8px;line-height:12.8px;color:#f8f8f8;white-space:pre;">1</div>
<div style="position:absolute;left:238.6px;top:680.2px;width:47.5px;height:1.6px;background:#0a6fc2"></div>
<svg style="position:absolute;left:305.6px;top:664.6px;opacity:1.0" width="19.80" height="9.20" viewBox="0 0 21.522 10"><g fill="none" stroke="#9d9d9d" stroke-width="0.85" stroke-linecap="square"><path transform="translate(0.000,0)" d="M0.3,1.2 H4 M0.8,2.5 H3.7 V6 H0.8 Z M0.8,4.2 H3.7 M0.3,7.5 H4 M2.2,0.3 V9.8 M7,0.3 L4.8,3 M7,0.3 L9.7,3 M5.8,3.6 H8.2 M5,4.8 H7 V9.5 M5,4.8 V9.7 M5,6.5 H7 M5,8 H7 M8.2,4.8 V8.5 M9.5,4.5 V9.8"/><path transform="translate(10.761,0)" d="M5,0.3 V9.4 M1.5,1.5 V4.8 H8.5 V1.5 M0.8,5.8 V9.4 H9.2 V5.8"/></g></svg>
<svg style="position:absolute;left:347.5px;top:664.6px;opacity:1.0" width="49.50" height="9.20" viewBox="0 0 53.804 10"><g fill="none" stroke="#9d9d9d" stroke-width="0.85" stroke-linecap="square"><path transform="translate(0.000,0)" d="M2.5,0.3 L0.5,4 M1.5,3 V9.8 M6.5,0.3 V2.2 M6.5,1.2 H9 M4,2.5 H9.3 V7.8 H4 Z M4,4.3 H9.3 M4,6 H9.3 M5.2,7.8 L3.8,9.6 M8,7.8 L9.5,9.6"/><path transform="translate(10.761,0)" d="M2,0.3 L0.3,3 M2,0.3 L4,3 M0.8,3.8 H3.5 M0.5,5.5 H3.8 M2.2,3.8 V9.4 M0.3,9.5 L4,9 M1,6.5 L1.5,8 M3.5,6.5 L3,8 M4.5,2 H9.8 M6,0.3 V3.8 M8.3,0.3 V3.8 M4.3,4 H10 M5.2,5.3 H9 V9.7 H5.2 Z M5.2,7.5 H9"/><path transform="translate(21.522,0)" d="M5,0.3 L5.6,1.5 M1.2,2.6 H8.8 M5,2.6 V9.2 M2,5.8 H8 M0.5,9.3 H9.5"/><path transform="translate(32.283,0)" d="M0.3,3 H3.8 M2,0.3 V9.8 L1.2,9.2 M0.3,7 L3.8,5.5 M7,0.2 V1 M4.5,2.8 V1.5 H9.7 V2.8 M6.2,3 L5,5 M7.8,3 L9.5,5 M5,6 H9.3 M7.2,6 V9.3 M4.5,9.3 H9.8"/><path transform="translate(43.043,0)" d="M4.5,0.3 L1.5,4 L8.5,3.8 M7,2.5 L9,4.5 M2,5.5 H8 V9.5 H2 Z"/></g></svg>
<svg style="position:absolute;left:418.6px;top:664.6px;opacity:1.0" width="29.40" height="9.20" viewBox="0 0 31.957 10"><g fill="none" stroke="#9d9d9d" stroke-width="0.85" stroke-linecap="square"><path transform="translate(0.000,0)" d="M2,0.3 L0.5,3 L3,4.2 L0.5,6.6 L4,6 M2.2,6.3 V9.8 M1,8 L0.5,9.5 M3.3,8 L3.8,9.5 M6.5,0.3 L4.5,3 M6,1.5 H9 L4.5,5.5 M6,2.5 L9.8,5.5 M6.5,6 L7.5,7 M6,8 L8,9.5"/><path transform="translate(10.652,0)" d="M2,0.3 V1.2 M0.5,2 H3.8 M1,3.5 L1.5,6.5 M3.3,3.5 L2.8,6.5 M0.3,8 L4,7.5 M7,0.3 V2.5 M5,0.8 V2.5 H9 V0.8 M4.5,3.8 H9.8 M5,9.8 V5.2 H9.3 V9.8 M6.3,5.5 V9 M8,5.5 V9"/><path transform="translate(21.304,0)" d="M0.3,2.8 H3.5 M1.9,0.3 V9.8 M1.9,3.2 L0.3,7 M2,3.5 L3.5,5.5 M5,0.5 L4.5,2.5 L6,3.5 M7.5,0.5 L7,2.5 L8.5,3.5 M4.2,5 H9.8 M6,5 L9.5,9.8 M8.5,3.8 L9.5,4.5 M5,5.5 L4.5,9.8 M4.5,7 H7 M9.5,7 L7,9.5"/></g></svg>
<svg style="position:absolute;left:470px;top:664.6px;opacity:1.0" width="29.40" height="9.20" viewBox="0 0 31.957 10"><g fill="none" stroke="#9d9d9d" stroke-width="0.85" stroke-linecap="square"><path transform="translate(0.000,0)" d="M1,0.8 L1.8,1.8 M0.3,4 H1.8 V8 M0.3,9.5 Q3,8.5 9.8,9.5 M3.5,1.2 H9.5 M4.2,2.5 H9 V6.5 H4.2 Z M4.2,4.5 H9 M3.2,7.8 H9.8 M6.6,0.3 V8.8"/><path transform="translate(10.652,0)" d="M0.3,3 H3.8 M2,0.3 V9.8 L1.2,9.2 M0.3,7 L3.8,5.5 M7,0.2 V1 M4.8,1.5 H9.5 M5.8,2.2 L6.2,3.5 M8.5,2.2 L8,3.5 M4.3,4 H10 M4.3,6.5 H10 M6.5,4.5 L5,8.5 L9.5,9.8 M8.5,5 L6,9.8"/><path transform="translate(21.304,0)" d="M0.5,3.8 H3.8 M2.2,1 V8 M0.3,8.5 L4,7.5 M6.5,0.3 L6,1.2 M5,1.5 H9 V5 H5 Z M5,3.2 H9 M4.3,6.3 H10 M4.8,8 H9.5 M7,5 V9.8"/></g></svg>
<div style="position:absolute;left:223px;top:684px;width:800px;height:19.6px;background:#37373d"></div>
<svg style="position:absolute;left:237px;top:688.7px" width="7" height="10" viewBox="0 0 7 10"><path d="M1,0.8 L5.4,5 L1,9.2" fill="none" stroke="#cccccc" stroke-width="1.1"/></svg>
<svg style="position:absolute;left:256px;top:689.3px" width="10" height="10" viewBox="0 0 10 10"><g fill="#c5c5c5"><rect x="0.5" y="0.5" width="8" height="1.3"/><rect x="0.5" y="3" width="6" height="1.3"/><rect x="0.5" y="5.5" width="8.5" height="1.3"/><rect x="0.5" y="8" width="5" height="1.3"/></g></svg>
<div style="position:absolute;left:269.00px;top:687.20px;font-size:12.2px;line-height:14.2px;color:#cccccc;white-space:pre;letter-spacing:-0.2px;transform:scaleX(1.0357);transform-origin:0 0;">android</div>
<div style="position:absolute;left:318.7px;top:686.5px;width:16.6px;height:16.4px;border-radius:8.2px;background:#616161"></div>
<div style="position:absolute;left:324.30px;top:687.90px;font-size:10.8px;line-height:12.8px;color:#f8f8f8;white-space:pre;">1</div>
</div></body></html>
